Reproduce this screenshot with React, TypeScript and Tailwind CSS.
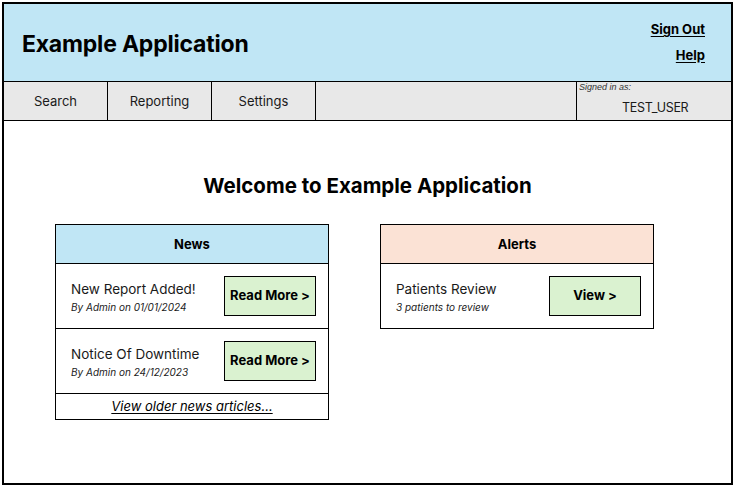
const font = { fontFamily: "Inter, 'Noto Sans', sans-serif" };

function NewsRow({ title, meta }: { title: string; meta: string }) {
  return (
    <div className="flex h-[65px] items-center justify-between border-b border-black pl-[15px] pr-[12px]">
      <div className="flex flex-col pt-[3px]">
        <span className="text-[13.5px] leading-[18px] text-[#1a1a1a]">{title}</span>
        <span className="mt-[2px] text-[10px] italic leading-[14px] text-[#1a1a1a]">{meta}</span>
      </div>
      <button className="flex h-[40px] w-[92px] items-center justify-center border border-black bg-[#daf2d0] text-[13px] font-bold text-black">
        Read More &gt;
      </button>
    </div>
  );
}

export default function App() {
  return (
    <div className="h-[486px] w-[734px] bg-white p-[2px]" style={font}>
      <div className="flex h-[483px] w-[731px] flex-col border-2 border-black">
        {/* header */}
        <div className="flex h-[78px] items-center justify-between border-b border-black bg-[#c0e6f5] pl-[18px] pr-[26px]">
          <h1 className="pt-[3px] text-[23px] font-bold tracking-[-0.2px] text-black">Example Application</h1>
          <div className="flex flex-col items-end gap-[6px] text-[13px] font-bold">
            <a className="underline underline-offset-2">Sign Out</a>
            <a className="underline underline-offset-2">Help</a>
          </div>
        </div>

        {/* nav */}
        <div className="flex h-[39px] border-b border-black bg-[#e8e8e8] text-[13px] text-[#1a1a1a]">
          <div className="flex w-[104px] items-center justify-center border-r border-black pt-[2px]">Search</div>
          <div className="flex w-[104px] items-center justify-center border-r border-black pt-[2px]">Reporting</div>
          <div className="flex w-[104px] items-center justify-center border-r border-black pt-[2px]">Settings</div>
          <div className="flex-1 border-r border-black" />
          <div className="flex w-[154px] flex-col pl-[2px]">
            <span className="-mt-[1px] text-[9px] italic leading-[12px] text-[#333]" style={{ fontFamily: "'Liberation Sans', sans-serif" }}>
              Signed in as:
            </span>
            <span className="mt-[6px] pl-[43px] text-[12.5px] tracking-[-0.3px]">TEST_USER</span>
          </div>
        </div>

        {/* body */}
        <div className="flex flex-col pt-[50px]">
          <h2 className="text-center text-[20.5px] font-bold text-black">Welcome to Example Application</h2>
          <div className="mt-[22px] flex gap-[51px] pl-[51px]">
            <div className="w-[274px] border border-black">
              <div className="flex h-[39px] items-center justify-center border-b border-black bg-[#c0e6f5] pt-[2px] text-[13px] font-bold">
                News
              </div>
              <NewsRow title="New Report Added!" meta="By Admin on 01/01/2024" />
              <NewsRow title="Notice Of Downtime" meta="By Admin on 24/12/2023" />
              <div className="flex h-[25px] items-center justify-center pt-[1px] text-[13px] italic underline underline-offset-2">
                View older news articles...
              </div>
            </div>

            <div className="w-[274px] self-start border border-black">
              <div className="flex h-[39px] items-center justify-center border-b border-black bg-[#fbe2d5] pt-[2px] text-[13px] font-bold">
                Alerts
              </div>
              <div className="flex h-[64px] items-center justify-between pl-[15px] pr-[12px]">
                <div className="flex flex-col pt-[3px]">
                  <span className="text-[13.5px] leading-[18px] text-[#1a1a1a]">Patients Review</span>
                  <span className="mt-[2px] text-[10px] italic leading-[14px] text-[#1a1a1a]">3 patients to review</span>
                </div>
                <button className="flex h-[40px] w-[92px] items-center justify-center border border-black bg-[#daf2d0] text-[13px] font-bold text-black">
                  View &gt;
                </button>
              </div>
            </div>
          </div>
        </div>
      </div>
    </div>
  );
}
